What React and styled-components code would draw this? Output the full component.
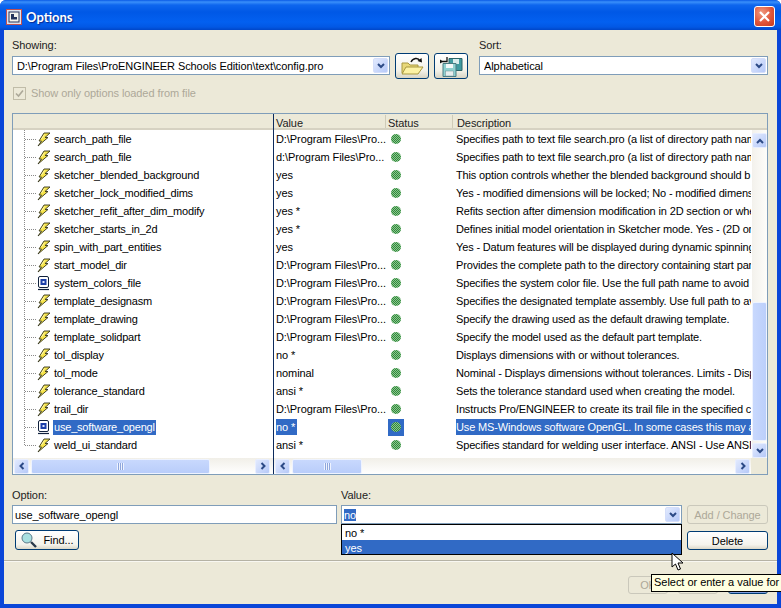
import React from 'react'
import styled, { createGlobalStyle } from 'styled-components'

const GlobalStyle = createGlobalStyle`
  html, body {
    margin: 0;
    padding: 0;
    background: #fff;
  }
  body {
    font-family: "Liberation Sans", Arial, sans-serif;
    font-size: 11px;
    letter-spacing: -0.08px;
    color: #000;
  }
`

const Window = styled.div`
  position: relative;
  width: 781px;
  height: 608px;
  overflow: hidden;
  display: flex;
  flex-direction: column;
  background: #0a46d8;
  border-radius: 6px 6px 0 0;
`

const TitleBar = styled.div`
  height: 30px;
  flex: none;
  display: flex;
  align-items: center;
  padding: 3px 6px 0 6px;
  box-sizing: border-box;
  background: linear-gradient(180deg, #0a5ae6 0, #3a8ffa 2px, #0e66ee 5px, #0058e6 12px, #0360f0 22px, #0258e4 27px, #0046c8 30px);
`

const TitleText = styled.span`
  margin-left: 4px;
  flex: 1;
  font-family: Lato, sans-serif;
  font-weight: 700;
  font-size: 13px;
  letter-spacing: 0;
  color: #fff;
  text-shadow: 1px 1px 1px #0a2a90;
`

const CloseButton = styled.div`
  width: 21px;
  height: 21px;
  margin-top: -1px;
  box-sizing: border-box;
  border: 1px solid #fff;
  border-radius: 3px;
  background: radial-gradient(circle at 35% 30%, #f09a80, #e0553a 55%, #c43a1e);
  display: flex;
  align-items: center;
  justify-content: center;
`

const Body = styled.div`
  flex: none;
  height: 574px;
  margin: 0 4px;
  padding: 0 9px 0 8px;
  box-sizing: border-box;
  background: #ece9d8;
  display: flex;
  flex-direction: column;
`

const TopRow = styled.div`
  display: flex;
  align-items: flex-end;
  margin-top: 8px;
  height: 37px;
`

const Field = styled.div`
  width: ${p => p.$width}px;
  flex: none;
  margin-left: ${p => p.$left || 0}px;
`

const Label = styled.div`
  height: 14px;
  line-height: 12px;
  margin-bottom: ${p => p.$gap ?? 3}px;
  color: #222;
`

const Combo = styled.div`
  height: 19px;
  box-sizing: border-box;
  border: 1px solid #7f9db9;
  background: #fff;
  display: flex;
  align-items: center;
  padding: 0 1px 0 ${p => p.$pad ?? 4}px;
  white-space: nowrap;
`

const ComboText = styled.span`
  flex: 1;
  overflow: hidden;
`

const DropArrow = styled.div`
  width: 15px;
  height: 15px;
  flex: none;
  border-radius: 2px;
  background: linear-gradient(135deg, #e2eafe, #b6c9f8);
  border: 1px solid #d4defa;
  box-sizing: border-box;
  display: flex;
  align-items: center;
  justify-content: center;
`

const IconButtons = styled.div`
  display: flex;
  gap: 5px;
  margin: 0 0 -4px 5px;
`

const IconButton = styled.div`
  width: 34px;
  height: 26px;
  box-sizing: border-box;
  border: 1px solid #003c74;
  border-radius: 3px;
  background: linear-gradient(180deg, #fff, #f2f1e8 70%, #d8d4c4);
  display: flex;
  align-items: center;
  justify-content: center;
`

const CheckRow = styled.div`
  display: flex;
  align-items: center;
  margin: 11px 0 0 1px;
  height: 14px;
  color: #aca899;
`

const CheckBox = styled.div`
  width: 13px;
  height: 13px;
  box-sizing: border-box;
  border: 1px solid #c0bca8;
  background: #ece9d8;
  margin-right: 5px;
  display: flex;
  align-items: center;
  justify-content: center;
`

const Table = styled.div`
  margin-top: 13px;
  height: 362px;
  box-sizing: border-box;
  border: 1px solid #7f9db9;
  display: flex;
  background: #fff;
`

const TreePane = styled.div`
  width: 260px;
  flex: none;
  display: flex;
  flex-direction: column;
`

const Divider = styled.div`
  width: 1px;
  flex: none;
  background: #0c2a5c;
`

const DataPane = styled.div`
  flex: 1;
  display: flex;
  flex-direction: column;
  min-width: 0;
`

const HeaderBar = styled.div`
  height: 16px;
  flex: none;
  box-sizing: border-box;
  background: #ece9d8;
  border-bottom: 2px solid #d6d2c2;
  display: grid;
  grid-template-columns: 111px 67px 298px 1fr;
`

const HeaderCell = styled.div`
  padding-left: ${p => p.$pad}px;
  box-shadow: ${p => (p.$sep ? 'inset 1px 0 0 #cfcbb8' : 'none')};
  height: 13px;
  margin-top: 1px;
  line-height: 17px;
  color: #222;
`

const Rows = styled.div`
  flex: 1;
  min-height: 0;
  display: flex;
`

const TreeRows = styled.div`
  position: relative;
  height: 324px;
  flex: none;
  &::before {
    content: '';
    position: absolute;
    left: 11px;
    top: 0;
    width: 1px;
    height: 315px;
    background-image: linear-gradient(#8a8a8a 50%, transparent 50%);
    background-size: 1px 2px;
  }
`

const TreeRow = styled.div`
  height: 18px;
  display: flex;
  align-items: center;
  padding-left: 12px;
`

const Dots = styled.div`
  width: 11px;
  height: 1px;
  flex: none;
  background-image: linear-gradient(90deg, #8a8a8a 50%, transparent 50%);
  background-size: 2px 1px;
`

const TreeIcon = styled.svg`
  width: 14px;
  height: 15px;
  flex: none;
  margin: 0 2px 0 1px;
`

const TreeLabel = styled.span`
  padding: 0 1px;
  line-height: 15px;
  letter-spacing: -0.2px;
  white-space: nowrap;
  background: ${p => (p.$selected ? '#316ac5' : 'transparent')};
  color: ${p => (p.$selected ? '#fff' : '#000')};
`

const DataRows = styled.div`
  width: 477px;
  flex: none;
  height: 324px;
`

const DataRow = styled.div`
  height: 18px;
  display: grid;
  grid-template-columns: 112px 67px 298px;
  align-items: center;
  white-space: nowrap;
`

const ValueCell = styled.div`
  padding-left: 2px;
  overflow: hidden;
`

const Highlight = styled.span`
  display: inline-block;
  line-height: 16px;
  padding-right: ${p => (p.$selected ? 2 : 0)}px;
  background: ${p => (p.$selected ? '#316ac5' : 'transparent')};
  color: ${p => (p.$selected ? '#fff' : '#000')};
`

const StatusCell = styled.div`
  margin-left: 2px;
  width: 16px;
  height: 17px;
  padding-right: 1px;
  box-sizing: border-box;
  display: flex;
  align-items: center;
  justify-content: center;
  background: ${p => (p.$selected ? '#316ac5' : 'transparent')};
`

const StatusDot = styled.div`
  width: 10px;
  height: 10px;
  border-radius: 50%;
  background: repeating-conic-gradient(#2f8a3a 0 25%, #8cc48f 0 50%) 0 0 / 2px 2px;
`

const DescCell = styled.div`
  overflow: hidden;
  padding-left: 3px;
  height: 16px;
  line-height: 16px;
  letter-spacing: -0.15px;
  background-clip: content-box;
  background-color: ${p => (p.$selected ? '#316ac5' : 'transparent')};
  color: ${p => (p.$selected ? '#fff' : '#000')};
`

const VScroll = styled.div`
  width: 15px;
  margin-left: 1px;
  height: 328px;
  flex: none;
  background: linear-gradient(90deg, #f3f1ec, #fdfdfa);
  display: flex;
  flex-direction: column;
  padding-top: 3px;
  box-sizing: border-box;
`

const VSpacer = styled.div`
  flex: 1;
`

const VThumb = styled.div`
  height: 139px;
  box-sizing: border-box;
  margin-bottom: 2px;
  border: 1px solid #eef3ff;
  border-radius: 2px;
  background: linear-gradient(90deg, #c8d8fd, #bccffb);
`

const ScrollButton = styled.div`
  width: 15px;
  height: 15px;
  flex: none;
  box-sizing: border-box;
  border: 1px solid #e8eeff;
  border-radius: 2px;
  background: linear-gradient(135deg, #e2eafe, #b6c9f8);
  display: flex;
  align-items: center;
  justify-content: center;
`

const HScroll = styled.div`
  height: 16px;
  flex: none;
  margin-top: 4px;
  display: flex;
  align-items: center;
  padding: 0 ${p => p.$right}px 0 1px;
  background: linear-gradient(180deg, #f1efe8, #fff);
`

const DataFooter = styled.div`
  display: flex;
`

const DataScrollSlot = styled.div`
  width: 477px;
  flex: none;
`

const HThumb = styled.div`
  width: ${p => p.$width}px;
  height: 15px;
  box-sizing: border-box;
  margin-left: 2px;
  border: 1px solid #eef3ff;
  border-radius: 2px;
  background: linear-gradient(180deg, #c8d8fd, #b9cdfa);
  display: flex;
  align-items: center;
  justify-content: center;
`

const Grip = styled.div`
  width: 7px;
  height: 7px;
  background: repeating-linear-gradient(90deg, #eef3ff 0 1px, #8ea6dc 1px 2px);
`

const HSpacer = styled.div`
  flex: 1;
`

const Corner = styled.div`
  height: 16px;
  flex: 1;
  margin-top: 4px;
  background: #ece9d8;
`

const OptionGrid = styled.div`
  margin-top: 14px;
  display: grid;
  grid-template-columns: 329px 346px 81px;
  align-items: start;
`

const OptionColumn = styled.div`
  width: 325px;
  display: flex;
  flex-direction: column;
`

const ValueColumn = styled.div`
  position: relative;
  width: 341px;
  display: flex;
  flex-direction: column;
`

const SelectedText = styled.span`
  background: #316ac5;
  color: #fff;
  line-height: 14px;
`

const DropList = styled.div`
  position: absolute;
  left: 0;
  right: 0;
  top: 35px;
  z-index: 3;
  height: 31px;
  box-sizing: border-box;
  border: 1px solid #000;
  background: #fff;
`

const DropItem = styled.div`
  height: ${p => (p.$active ? 14 : 15)}px;
  line-height: 17px;
  padding-left: 3px;
  background: ${p => (p.$active ? '#316ac5' : '#fff')};
  color: ${p => (p.$active ? '#fff' : '#000')};
`

const PushButton = styled.div`
  width: ${p => p.$width}px;
  height: ${p => p.$height || 19}px;
  box-sizing: border-box;
  margin: ${p => p.$margin || 0};
  border: 1px solid ${p => (p.$disabled ? '#cac8bb' : '#003c74')};
  border-radius: 3px;
  color: ${p => (p.$disabled ? '#aca899' : '#000')};
  background: ${p => (p.$disabled ? '#ece9d8' : 'linear-gradient(180deg, #fff, #f4f3ec 75%, #dcd8c8)')};
  box-shadow: ${p => (p.$default ? 'inset 0 -2px 0 #7f9ee0' : 'none')};
  display: flex;
  align-items: center;
  justify-content: center;
  gap: 5px;
  white-space: nowrap;
`

const ActionColumn = styled.div`
  display: flex;
  flex-direction: column;
  padding-top: 16px;
`

const Separator = styled.div`
  margin: 10px -9px 0 -8px;
  height: 1px;
  background: #b5b2a4;
  box-shadow: 0 1px 0 #f8f7f1;
`

const FooterRow = styled.div`
  display: flex;
  justify-content: flex-end;
  gap: 10px;
  margin-top: 15px;
`

const Tooltip = styled.div`
  position: absolute;
  left: 651px;
  top: 574px;
  z-index: 4;
  height: 18px;
  box-sizing: border-box;
  padding: 0 3px 0 2px;
  line-height: 15px;
  letter-spacing: -0.03px;
  border: 1px solid #000;
  background: #ffffe1;
  white-space: nowrap;
`

const Pointer = styled.svg`
  position: absolute;
  left: 671px;
  top: 552px;
  z-index: 5;
`

const rows = [
  ['search_path_file', 'bolt', 'D:\\Program Files\\Pro...', 'Specifies path to text file search.pro (a list of directory path nam'],
  ['search_path_file', 'bolt', 'd:\\Program Files\\Pro...', 'Specifies path to text file search.pro (a list of directory path nam'],
  ['sketcher_blended_background', 'bolt', 'yes', 'This option controls whether the blended background should b'],
  ['sketcher_lock_modified_dims', 'bolt', 'yes', 'Yes - modified dimensions will be locked; No - modified dimensi'],
  ['sketcher_refit_after_dim_modify', 'bolt', 'yes *', 'Refits section after dimension modification in 2D section or whe'],
  ['sketcher_starts_in_2d', 'bolt', 'yes *', 'Defines initial model orientation in Sketcher mode. Yes - (2D ori'],
  ['spin_with_part_entities', 'bolt', 'yes', 'Yes - Datum features will be displayed during dynamic spinning'],
  ['start_model_dir', 'bolt', 'D:\\Program Files\\Pro...', 'Provides the complete path to the directory containing start par'],
  ['system_colors_file', 'chip', 'D:\\Program Files\\Pro...', 'Specifies the system color file. Use the full path name to avoid'],
  ['template_designasm', 'bolt', 'D:\\Program Files\\Pro...', 'Specifies the designated template assembly. Use full path to av'],
  ['template_drawing', 'bolt', 'D:\\Program Files\\Pro...', 'Specify the drawing used as the default drawing template.'],
  ['template_solidpart', 'bolt', 'D:\\Program Files\\Pro...', 'Specify the model used as the default part template.'],
  ['tol_display', 'bolt', 'no *', 'Displays dimensions with or without tolerances.'],
  ['tol_mode', 'bolt', 'nominal', 'Nominal - Displays dimensions without tolerances. Limits - Displ'],
  ['tolerance_standard', 'bolt', 'ansi *', 'Sets the tolerance standard used when creating the model.'],
  ['trail_dir', 'bolt', 'D:\\Program Files\\Pro...', 'Instructs Pro/ENGINEER to create its trail file in the specified c'],
  ['use_software_opengl', 'chip', 'no *', 'Use MS-Windows software OpenGL. In some cases this may a', true],
  ['weld_ui_standard', 'bolt', 'ansi *', 'Specifies standard for welding user interface. ANSI - Use ANSI'],
]

function Chevron({ dir = 'down' }) {
  const paths = {
    down: 'M2 3 L5 6 L8 3',
    up: 'M2 7 L5 4 L8 7',
    left: 'M6.5 2 L3.5 5 L6.5 8',
    right: 'M3.5 2 L6.5 5 L3.5 8',
  }
  return (
    <svg width="10" height="10" viewBox="0 0 10 10">
      <path d={paths[dir]} fill="none" stroke="#2c4a86" strokeWidth="2" />
    </svg>
  )
}

function RowIcon({ kind }) {
  if (kind === 'chip') {
    return (
      <TreeIcon viewBox="0 0 14 15">
        <rect x="1.5" y="0.5" width="10" height="11" rx="1.5" fill="#fff" stroke="#10203c" />
        <rect x="3.5" y="3" width="6" height="6" fill="#1c3fa8" />
        <rect x="5.5" y="5" width="2" height="2" fill="#dfe8ff" />
        <path d="M1 13.5 H12" stroke="#10203c" strokeWidth="1.2" />
      </TreeIcon>
    )
  }
  return (
    <TreeIcon viewBox="0 0 14 15">
      <path d="M7 1 L13 1 L8 5.5 L11 5.5 L1 14 L4.5 9 L2 9 Z" fill="#f6e44a" stroke="#34341c" strokeWidth="0.9" />
      <path d="M7.5 2.5 L4.5 7" stroke="#fff8b0" strokeWidth="1" />
    </TreeIcon>
  )
}

function HorizontalBar({ thumb, right }) {
  return (
    <HScroll $right={right}>
      <ScrollButton><Chevron dir="left" /></ScrollButton>
      <HThumb $width={thumb}><Grip /></HThumb>
      <HSpacer />
      <ScrollButton><Chevron dir="right" /></ScrollButton>
    </HScroll>
  )
}

export default function App() {
  return (
    <Window>
      <GlobalStyle />
      <TitleBar>
        <svg width="16" height="16" viewBox="0 0 16 16">
          <rect x="0.5" y="0.5" width="15" height="15" fill="#dfe3ee" stroke="#c05050" />
          <rect x="3" y="3" width="10" height="10" fill="#f4f4ee" stroke="#24345c" />
          <path d="M5 5 H8 V8 H11 V10.5 H5 Z" fill="#24345c" />
        </svg>
        <TitleText>Options</TitleText>
        <CloseButton>
          <svg width="13" height="13" viewBox="0 0 13 13">
            <path d="M2 2 L11 11 M11 2 L2 11" stroke="#fff" strokeWidth="2.2" />
          </svg>
        </CloseButton>
      </TitleBar>
      <Body>
        <TopRow>
          <Field $width={378}>
            <Label>Showing:</Label>
            <Combo>
              <ComboText>D:\Program Files\ProENGINEER Schools Edition\text\config.pro</ComboText>
              <DropArrow><Chevron /></DropArrow>
            </Combo>
          </Field>
          <IconButtons>
            <IconButton>
              <svg width="26" height="20" viewBox="0 0 26 20">
                <path d="M3 7 H9 L11 9 H19 V17 H3 Z" fill="#e8d878" stroke="#a89840" />
                <path d="M3 18 L7 11 H24 L19 18 Z" fill="#fcf2a4" stroke="#a89840" />
                <path d="M12 6 C14 2 19 1 21 5" fill="none" stroke="#111" strokeWidth="1.4" />
                <path d="M18.5 5 L23 6.5 L22.5 2 Z" fill="#111" />
              </svg>
            </IconButton>
            <IconButton>
              <svg width="26" height="22" viewBox="0 0 26 22">
                <path d="M11 3.5 H24 V15.5 H11 Z" fill="#3f9aa0" stroke="#2c6468" />
                <rect x="15" y="4" width="6" height="5" fill="#d8ecec" />
                <path d="M5 8.5 H18 V21.5 H5 Z" fill="#8ed0d0" stroke="#4a7a80" />
                <rect x="8" y="9" width="7" height="4" fill="#f4f8f8" />
                <rect x="7.5" y="16" width="8" height="5" fill="#e8eeee" stroke="#6a8a90" strokeWidth="0.5" />
                <path d="M3 6.5 H9 V2" fill="none" stroke="#111" strokeWidth="1.3" />
                <path d="M5 6.5 L2 4.5 L2 8.5 Z" fill="#111" />
              </svg>
            </IconButton>
          </IconButtons>
          <Field $width={289} $left={11}>
            <Label>Sort:</Label>
            <Combo>
              <ComboText>Alphabetical</ComboText>
              <DropArrow><Chevron /></DropArrow>
            </Combo>
          </Field>
        </TopRow>

        <CheckRow>
          <CheckBox>
            <svg width="9" height="9" viewBox="0 0 9 9">
              <path d="M1 4.5 L3.5 7 L8 1.5" fill="none" stroke="#aca899" strokeWidth="1.6" />
            </svg>
          </CheckBox>
          Show only options loaded from file
        </CheckRow>

        <Table>
          <TreePane>
            <HeaderBar />
            <TreeRows>
              {rows.map(([name, icon, , , selected], i) => (
                <TreeRow key={i}>
                  <Dots />
                  <RowIcon kind={icon} />
                  <TreeLabel $selected={selected}>{name}</TreeLabel>
                </TreeRow>
              ))}
            </TreeRows>
            <HorizontalBar thumb={179} right={3} />
          </TreePane>
          <Divider />
          <DataPane>
            <HeaderBar>
              <HeaderCell $pad={2}>Value</HeaderCell>
              <HeaderCell $pad={3} $sep>Status</HeaderCell>
              <HeaderCell $pad={5} $sep>Description</HeaderCell>
            </HeaderBar>
            <Rows>
              <DataRows>
                {rows.map(([, , value, desc, selected], i) => (
                  <DataRow key={i}>
                    <ValueCell><Highlight $selected={selected}>{value}</Highlight></ValueCell>
                    <StatusCell $selected={selected}><StatusDot /></StatusCell>
                    <DescCell $selected={selected}>{desc}</DescCell>
                  </DataRow>
                ))}
              </DataRows>
              <VScroll>
                <ScrollButton><Chevron dir="up" /></ScrollButton>
                <VSpacer />
                <VThumb />
                <ScrollButton><Chevron /></ScrollButton>
              </VScroll>
            </Rows>
            <DataFooter>
              <DataScrollSlot>
                <HorizontalBar thumb={70} right={1} />
              </DataScrollSlot>
              <Corner />
            </DataFooter>
          </DataPane>
        </Table>

        <OptionGrid>
          <OptionColumn>
            <Label $gap={2}>Option:</Label>
            <Combo $pad={2}>use_software_opengl</Combo>
            <PushButton $width={64} $height={20} $margin="6px 0 0 3px">
              <svg width="18" height="18" viewBox="0 0 18 18">
                <circle cx="7" cy="7" r="5" fill="#a8e0e0" stroke="#5a7a8a" />
                <path d="M11 11 L16 16" stroke="#2a3a4a" strokeWidth="2.4" />
              </svg>
              Find...
            </PushButton>
          </OptionColumn>
          <ValueColumn>
            <Label $gap={2}>Value:</Label>
            <Combo $pad={2}>
              <ComboText><SelectedText>no</SelectedText></ComboText>
              <DropArrow><Chevron /></DropArrow>
            </Combo>
            <DropList>
              <DropItem>no *</DropItem>
              <DropItem $active>yes</DropItem>
            </DropList>
          </ValueColumn>
          <ActionColumn>
            <PushButton $width={81} $disabled>Add / Change</PushButton>
            <PushButton $width={81} $margin="7px 0 0">Delete</PushButton>
          </ActionColumn>
        </OptionGrid>

        <Separator />
        <FooterRow>
          <PushButton $width={40} $height={18} $disabled>OK</PushButton>
          <PushButton $width={40} $height={18} $disabled>Apply</PushButton>
          <PushButton $width={40} $height={18} $default>Close</PushButton>
        </FooterRow>
      </Body>
      <Tooltip>Select or enter a value for</Tooltip>
      <Pointer width="14" height="20" viewBox="0 0 14 20">
        <path d="M1 1 L1 15 L4.5 12 L7 18 L9.5 17 L7 11 L12 11 Z" fill="#fff" stroke="#000" />
      </Pointer>
    </Window>
  )
}
